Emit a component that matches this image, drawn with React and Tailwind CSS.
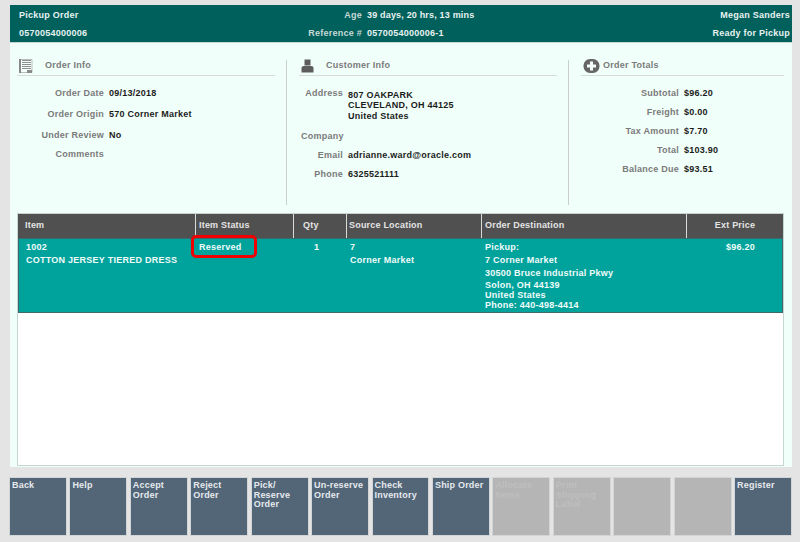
import React from 'react';

const FONT = "font-['Liberation_Sans',Arial,sans-serif]";

const buttons = [
  { label: 'Back' },
  { label: 'Help' },
  { label: ['Accept', 'Order'] },
  { label: ['Reject', 'Order'] },
  { label: ['Pick/', 'Reserve', 'Order'] },
  { label: ['Un-reserve', 'Order'] },
  { label: ['Check', 'Inventory'] },
  { label: 'Ship Order' },
  { label: ['Allocate', 'Items'], off: true },
  { label: ['Print', 'Shipping', 'Label'], off: true },
  { label: '', off: true },
  { label: '', off: true },
  { label: 'Register' },
];

function DocIcon() {
  return (
    <svg width="14" height="14" viewBox="0 0 14 14" className="shrink-0">
      <path d="M0.5 0.5V13.5H13V0.5Z" fill="#f4fffb" stroke="#a0a0a0" strokeWidth="0.7" />
      <path d="M0 0H2V14H0Z" fill="#888" />
      <path d="M3 1.5H12M3 3.5H12M3 5.5H12M3 7.5H12M3 9.5H12" stroke="#8f8f8f" strokeWidth="1" />
      <path d="M8 11H13V14H8Z" fill="#8a8a8a" />
    </svg>
  );
}

function PersonIcon() {
  return (
    <svg width="13" height="14" viewBox="0 0 13 14" className="shrink-0">
      <path d="M3.5 0.5H9.5V6.5H3.5Z" fill="#5c5c5c" />
      <path d="M0.5 9C0.5 7.8 1.5 7 3 7H10C11.5 7 12.5 7.8 12.5 9V13.5H0.5Z" fill="#5c5c5c" />
    </svg>
  );
}

function PlusIcon() {
  return (
    <svg width="17" height="14" viewBox="0 0 17 14" className="shrink-0">
      <rect x="0.5" y="0" width="16" height="14" rx="6.5" fill="#666" />
      <path d="M7 2.5H10V5.5H13V8.5H10V11.5H7V8.5H4V5.5H7Z" fill="#f4fffb" />
    </svg>
  );
}

function SectionTitle({ icon, title, gap }) {
  return (
    <div className={`box-content flex h-[16px] items-center ${gap} border-b border-[#d8dcd9] pb-[1px]`}>
      {icon}
      <span className="-mt-[1px] text-[9px] font-bold leading-none tracking-[0.25px] text-[#7a7a7a]">{title}</span>
    </div>
  );
}

function InfoRow({ label, labelW, h, children }) {
  return (
    <div className={`flex items-start ${h}`}>
      <span className={`${labelW} text-right text-[9px] font-bold leading-[11px] tracking-[0.25px] text-[#7a7a7a]`}>{label}</span>
      <span className="ml-[5px] text-[9px] font-bold leading-[11px] tracking-[0.25px] text-[#1c1c1c]">{children}</span>
    </div>
  );
}

function HeadCell({ w, pl, children }) {
  return (
    <div className={`${w} ${pl} flex h-[24px] items-center border-r border-[#d8dcd9] bg-[#505050] text-[9px] font-bold tracking-[0.2px] text-[#e4e4e4]`}>
      {children}
    </div>
  );
}

export default function App() {
  return (
    <div className={`${FONT} flex h-[542px] w-[800px] flex-col overflow-hidden bg-[#e4e4e4] pl-[10px] pr-[8px] pt-[5px]`}>
      <div className="flex h-[462px] flex-col bg-[#f1fffa]">
        {/* Header band */}
        <header className="grid h-[38px] grid-cols-[288px_auto_1fr] whitespace-nowrap border-b border-[#c4d6d2] bg-[#00605c] pl-[9px] pr-[2px] pt-[1px] text-[9px] font-bold leading-[18px] tracking-[0.25px] text-[#e8f2f0]">
          <div>
            <div>Pickup Order</div>
            <div>0570054000006</div>
          </div>
          <div>
            <div className="flex">
              <span className="w-[55px] text-right text-[#c8d8d6]">Age</span>
              <span className="ml-[5px] tracking-[0.18px]">39 days, 20 hrs, 13 mins</span>
            </div>
            <div className="flex">
              <span className="w-[55px] text-right text-[#c8d8d6]">Reference #</span>
              <span className="ml-[5px]">0570054000006-1</span>
            </div>
          </div>
          <div className="text-right">
            <div>Megan Sanders</div>
            <div>Ready for Pickup</div>
          </div>
        </header>

        {/* Info columns */}
        <section className="flex h-[170px] pl-[7px] pr-[8px] pt-[15px]">
          <div className="h-[147px] w-[258px]">
            <SectionTitle icon={<DocIcon />} title="Order Info" gap="gap-[12px] pl-[2px]" />
            <div className="pt-[12px]">
              <InfoRow label="Order Date" labelW="w-[87px]" h="h-[21px]">09/13/2018</InfoRow>
              <InfoRow label="Order Origin" labelW="w-[87px]" h="h-[21px]">570 Corner Market</InfoRow>
              <InfoRow label="Under Review" labelW="w-[87px]" h="h-[19px]">No</InfoRow>
              <InfoRow label="Comments" labelW="w-[87px]" h="h-[19px]" />
            </div>
          </div>
          <div className="ml-[11px] mt-[2px] h-[145px] w-[1px] bg-[#c9cfcc]" />
          <div className="ml-[12px] h-[147px] w-[258px]">
            <SectionTitle icon={<PersonIcon />} title="Customer Info" gap="gap-[12px] pl-[2px]" />
            <div className="pt-[12px]">
              <div className="flex h-[43px] items-start">
                <span className="w-[44px] text-right text-[9px] font-bold leading-[11px] tracking-[0.25px] text-[#7a7a7a]">Address</span>
                <span className="ml-[5px] pt-[2px] text-[9px] font-bold leading-[10.4px] tracking-[0.25px] text-[#1c1c1c]">
                  807 OAKPARK
                  <br />
                  CLEVELAND, OH 44125
                  <br />
                  United States
                </span>
              </div>
              <div className="h-[19px] pl-[2px] text-[9px] font-bold leading-[11px] tracking-[0.25px] text-[#7a7a7a]">Company</div>
              <InfoRow label="Email" labelW="w-[44px]" h="h-[19px]">adrianne.ward@oracle.com</InfoRow>
              <InfoRow label="Phone" labelW="w-[44px]" h="h-[19px]">6325521111</InfoRow>
            </div>
          </div>
          <div className="ml-[11px] mt-[2px] h-[145px] w-[1px] bg-[#c9cfcc]" />
          <div className="ml-[12px] h-[147px] w-[203px]">
            <SectionTitle icon={<PlusIcon />} title="Order Totals" gap="gap-[3px] pl-[2px]" />
            <div className="pt-[12px]">
              <InfoRow label="Subtotal" labelW="w-[98px]" h="h-[19px]">$96.20</InfoRow>
              <InfoRow label="Freight" labelW="w-[98px]" h="h-[19px]">$0.00</InfoRow>
              <InfoRow label="Tax Amount" labelW="w-[98px]" h="h-[19px]">$7.70</InfoRow>
              <InfoRow label="Total" labelW="w-[98px]" h="h-[19px]">$103.90</InfoRow>
              <InfoRow label="Balance Due" labelW="w-[98px]" h="h-[19px]">$93.51</InfoRow>
            </div>
          </div>
        </section>

        {/* Items table */}
        <section className="relative ml-[7px] h-[253px] w-[767px] border-b border-l border-r border-[#c4d6d2] bg-white">
          <div className="flex border-t border-[#c9cfcc]">
            <HeadCell w="w-[178px]" pl="pl-[7px]">Item</HeadCell>
            <HeadCell w="w-[98px]" pl="pl-[3px]">Item Status</HeadCell>
            <HeadCell w="w-[53px]" pl="pl-[9px]">Qty</HeadCell>
            <HeadCell w="w-[135px]" pl="pl-[2px]">Source Location</HeadCell>
            <HeadCell w="w-[205px]" pl="pl-[3px]">Order Destination</HeadCell>
            <div className="flex h-[24px] flex-1 items-center justify-center bg-[#505050] text-[9px] font-bold tracking-[0.2px] text-[#e4e4e4]">Ext Price</div>
          </div>
          <div className="flex h-[75px] border border-[#3f6a6c] bg-[#00a39c] text-[9px] font-bold tracking-[0.25px] text-[#f0fbfa]">
            <div className="w-[177px] pl-[7px] pt-[2px] leading-[13px]">
              <div>1002</div>
              <div>COTTON JERSEY TIERED DRESS</div>
            </div>
            <div className="w-[98px] pl-[3px] pt-[2px] leading-[13px]">Reserved</div>
            <div className="w-[53px] pl-[20px] pt-[2px] leading-[13px]">1</div>
            <div className="w-[135px] pl-[3px] pt-[2px] leading-[13px]">
              <div>7</div>
              <div>Corner Market</div>
            </div>
            <div className="w-[205px] pl-[3px] pt-[2px]">
              <div className="leading-[13px]">Pickup:</div>
              <div className="leading-[13px]">7 Corner Market</div>
              <div className="pt-[1px] leading-[10px]">
                <div className="mb-[0.5px] leading-[11px]">30500 Bruce Industrial Pkwy</div>
                <div>Solon, OH 44139</div>
                <div>United States</div>
                <div>Phone: 440-498-4414</div>
              </div>
            </div>
            <div className="flex-1 pr-[27px] pt-[2px] text-right leading-[13px]">$96.20</div>
          </div>
          {/* red highlight drawn over the status cell */}
          <div className="absolute left-[173px] top-[22px] h-[23px] w-[66px] rounded-[5px] border-[3px] border-[#f00000]" />
        </section>
      </div>

      {/* Button bar */}
      <footer className="-ml-[1px] mt-[10px] grid h-[59px] grid-cols-[repeat(13,minmax(0,1fr))] gap-[2.5px]">
        {buttons.map((b, i) => (
          <div
            key={i}
            className={`h-[59px] overflow-hidden border border-[#d2d4d6] pl-[2px] pt-[3px] text-[9px] font-bold leading-[9.6px] tracking-[0.2px] ${b.off ? 'bg-[#b5b5b5] text-[#bfbfbf]' : 'bg-[#536678] text-[#e6eaee]'}`}
          >
            {Array.isArray(b.label) ? b.label.map((l) => <div key={l}>{l}</div>) : b.label}
          </div>
        ))}
      </footer>
    </div>
  );
}
